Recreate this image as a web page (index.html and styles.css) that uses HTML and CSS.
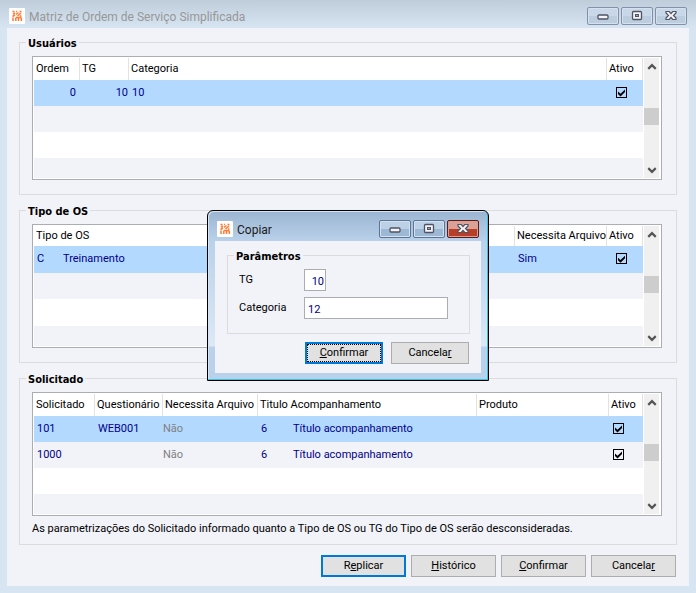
FILE: index.html
```html
<!DOCTYPE html>
<html lang="pt-BR">
<head>
<meta charset="UTF-8">
<meta name="viewport" content="width=device-width, initial-scale=1.0">
<title>Matriz de Ordem de Serviço Simplificada</title>
<link rel="stylesheet" href="styles.css">
</head>
<body>

<!-- Ícones reutilizados -->
<svg class="sprite" aria-hidden="true">
  <symbol id="logo" viewBox="0 0 16 16">
    <rect width="16" height="16" rx="1" fill="#fff"/>
    <path fill="none" stroke="#ff7a35" stroke-width="1.500" d="M3.500 3.500h2M12.500 3.500h-2M7 3.500h1M4 6l2-1M3.500 8.500L6 7M7 6.500l2.500-2M8.500 8l3.500-3M11 7.500l1.500 1M4 13V9.500M6.800 13V9.500M9.500 13V9.500M12.300 13V9.500M7 9.500h5"/>
  </symbol>
  <symbol id="min" viewBox="0 0 12 12">
    <rect x="1" y="5" width="10" height="4" rx="1" fill="#f4f4f4" stroke="#4f5364" stroke-width="1.300"/>
  </symbol>
  <symbol id="max" viewBox="0 0 12 12">
    <rect x="1.500" y="1.500" width="9" height="8" rx="1" fill="#f4f4f4" stroke="#4f5364" stroke-width="1.300"/>
    <rect x="4.500" y="4.500" width="3" height="2" fill="#8fa6c6" stroke="#4f5364"/>
  </symbol>
  <symbol id="close" viewBox="0 0 12 12">
    <path d="M1 1.500h3.200L6 3.500l1.800-2H11v1.500L8.500 5.500 11 8v1.500H7.800L6 7.500l-1.800 2H1V8l2.500-2.500L1 3z" fill="#f4f4f4" stroke="#4f5364" stroke-width="1.200"/>
  </symbol>
  <symbol id="up" viewBox="0 0 8 8">
    <path d="M1 5.500l3-3 3 3" fill="none" stroke="#555" stroke-width="1.700"/>
  </symbol>
  <symbol id="down" viewBox="0 0 8 8">
    <path d="M1 2.500l3 3 3-3" fill="none" stroke="#555" stroke-width="1.700"/>
  </symbol>
</svg>

<div class="window">
  <header class="titlebar">
    <svg class="logo"><use href="#logo"/></svg>
    <h1>Matriz de Ordem de Serviço Simplificada</h1>
    <div class="controls">
      <button type="button" aria-label="Minimizar"><svg><use href="#min"/></svg></button>
      <button type="button" aria-label="Maximizar"><svg><use href="#max"/></svg></button>
      <button type="button" aria-label="Fechar"><svg><use href="#close"/></svg></button>
    </div>
  </header>

  <main class="content">
    <fieldset class="group">
      <legend>Usuários</legend>
      <div class="grid">
        <table>
          <colgroup><col class="w-ordem"><col class="w-tg"><col><col class="w-ativo"></colgroup>
          <thead>
            <tr><th>Ordem</th><th>TG</th><th>Categoria</th><th>Ativo</th></tr>
          </thead>
          <tbody>
            <tr class="selected">
              <td class="num far">0</td><td class="num">10</td><td>10</td>
              <td class="check"><input type="checkbox" checked aria-label="Ativo"></td>
            </tr>
            <tr><td colspan="4"></td></tr>
            <tr><td colspan="4"></td></tr>
            <tr class="cut"><td colspan="4"></td></tr>
          </tbody>
        </table>
        <div class="scroll">
          <button type="button" aria-label="Subir"><svg><use href="#up"/></svg></button>
          <span class="thumb"></span>
          <button type="button" aria-label="Descer"><svg><use href="#down"/></svg></button>
        </div>
      </div>
    </fieldset>

    <fieldset class="group">
      <legend>Tipo de OS</legend>
      <div class="grid">
        <table class="short">
          <colgroup><col class="w-codigo"><col><col class="w-arquivo"><col class="w-ativo"></colgroup>
          <thead>
            <tr><th colspan="2">Tipo de OS</th><th>Necessita Arquivo</th><th>Ativo</th></tr>
          </thead>
          <tbody>
            <tr class="selected">
              <td>C</td><td class="tight">Treinamento</td><td>Sim</td>
              <td class="check"><input type="checkbox" checked aria-label="Ativo"></td>
            </tr>
            <tr><td colspan="4"></td></tr>
            <tr><td colspan="4"></td></tr>
            <tr class="cut"><td colspan="4"></td></tr>
          </tbody>
        </table>
        <div class="scroll">
          <button type="button" aria-label="Subir"><svg><use href="#up"/></svg></button>
          <span class="thumb"></span>
          <button type="button" aria-label="Descer"><svg><use href="#down"/></svg></button>
        </div>
      </div>
    </fieldset>

    <fieldset class="group last">
      <legend>Solicitado</legend>
      <div class="grid">
        <table class="requests">
          <colgroup>
            <col class="w-solicitado"><col class="w-questionario"><col class="w-necessita">
            <col class="w-numero"><col class="w-titulo"><col><col class="w-ativo-sm">
          </colgroup>
          <thead>
            <tr>
              <th>Solicitado</th><th>Questionário</th><th>Necessita Arquivo</th>
              <th colspan="2">Titulo Acompanhamento</th><th>Produto</th><th>Ativo</th>
            </tr>
          </thead>
          <tbody>
            <tr class="selected">
              <td>101</td><td>WEB001</td><td class="off">Não</td><td>6</td><td class="wide">Título acompanhamento</td><td></td>
              <td class="check"><input type="checkbox" checked aria-label="Ativo"></td>
            </tr>
            <tr>
              <td>1000</td><td></td><td class="off">Não</td><td>6</td><td class="wide">Título acompanhamento</td><td></td>
              <td class="check"><input type="checkbox" checked aria-label="Ativo"></td>
            </tr>
            <tr><td colspan="7"></td></tr>
            <tr class="cut"><td colspan="7"></td></tr>
          </tbody>
        </table>
        <div class="scroll">
          <button type="button" aria-label="Subir"><svg><use href="#up"/></svg></button>
          <span class="thumb"></span>
          <button type="button" aria-label="Descer"><svg><use href="#down"/></svg></button>
        </div>
      </div>
      <p class="note">As parametrizações do Solicitado informado quanto a Tipo de OS ou TG do Tipo de OS serão desconsideradas.</p>
    </fieldset>

    <div class="actions">
      <button type="button" class="btn default">R<u>e</u>plicar</button>
      <button type="button" class="btn"><u>H</u>istórico</button>
      <button type="button" class="btn"><u>C</u>onfirmar</button>
      <button type="button" class="btn">Cancela<u>r</u></button>
    </div>
  </main>
</div>

<!-- Diálogo Copiar -->
<div class="dialog" role="dialog" aria-labelledby="dialogTitle">
  <header class="titlebar">
    <svg class="logo"><use href="#logo"/></svg>
    <h2 id="dialogTitle">Copiar</h2>
    <div class="controls">
      <button type="button" aria-label="Minimizar"><svg><use href="#min"/></svg></button>
      <button type="button" aria-label="Maximizar"><svg><use href="#max"/></svg></button>
      <button type="button" class="close" aria-label="Fechar"><svg><use href="#close"/></svg></button>
    </div>
  </header>
  <form class="dialog-body">
    <fieldset class="group params">
      <legend>Parâmetros</legend>
      <label for="tg">TG</label>
      <input type="text" id="tg" class="field small" value="10">
      <label for="categoria">Categoria</label>
      <input type="text" id="categoria" class="field" value="12">
    </fieldset>
    <div class="actions">
      <button type="button" class="btn default focus"><u>C</u>onfirmar</button>
      <button type="button" class="btn">Cancela<u>r</u></button>
    </div>
  </form>
</div>

</body>
</html>
```
FILE: styles.css
```css
* {
  box-sizing: border-box;
}

body {
  margin: 0;
  background: #d7e4f2;
  color: #000;
  font-family: Roboto, "Open Sans", sans-serif;
  font-size: 11px;
  line-height: 14px;
}

.sprite {
  position: absolute;
  width: 0;
  height: 0;
}

/* Janela principal */
.window {
  display: flex;
  flex-direction: column;
  min-height: 100vh;
  padding: 0 7px 7px;
  background: linear-gradient(#bfcddb, #d7e4f2 28px);
}

.titlebar {
  display: flex;
  align-items: center;
  gap: 4px;
  height: 28px;
  padding: 4px 2px 0;
}

.titlebar h1,
.titlebar h2 {
  flex: 1;
  margin: 0;
  padding-top: 1px;
  font-size: 12px;
  font-weight: normal;
  line-height: 16px;
  color: #979797;
}

.logo {
  width: 16px;
  height: 16px;
}

.controls {
  display: flex;
  gap: 2px;
}

.controls button {
  display: flex;
  align-items: center;
  justify-content: center;
  width: 32px;
  height: 18px;
  padding: 0;
  border: 1px solid #8290aa;
  border-radius: 2px;
  background: linear-gradient(#c9d8e8 50%, #bccde0 50%);
  box-shadow: inset 0 0 0 1px #d5e1ee;
}

.controls svg {
  width: 12px;
  height: 12px;
}

.content {
  flex: 1;
  padding: 6px 12px 9px;
  background: #f2f3f9;
}

/* Grupos */
.group {
  min-width: 0;
  margin: 0 0 7px;
  padding: 5px 14px 14px 12px;
  border: 1px solid #dcdcdc;
}

.group legend {
  margin-left: -6px;
  padding: 3px 2px 0;
  font-family: "DejaVu Sans Condensed", "Noto Sans", sans-serif;
  font-weight: bold;
}

.last {
  margin-bottom: 10px;
  padding-bottom: 8px;
}

/* Tabelas */
.grid {
  display: flex;
  height: 124px;
  padding: 1px;
  border: 1px solid #abadb3;
  background: #fff;
}

.grid table {
  flex: 1;
  width: 0;
  border-collapse: separate;
  border-spacing: 0;
  table-layout: fixed;
}

.grid th {
  height: 22px;
  padding: 0 2px;
  border-right: 1px solid #e2e2e2;
  font-weight: normal;
  text-align: left;
  white-space: nowrap;
}

.grid .short th {
  height: 20px;
}

.grid td {
  height: 26px;
  padding: 0 3px;
  color: #00008b;
  white-space: nowrap;
}

.grid .cut td {
  height: 20px;
}

.grid tbody tr:nth-child(even) {
  background: #f2f3f9;
}

.grid tbody .selected {
  background: #b3d9ff;
}

.grid .num {
  padding-right: 1px;
  text-align: right;
}

.grid .far {
  padding-right: 4px;
}

.grid .tight {
  padding-left: 1px;
}

.grid .off {
  padding-left: 0;
  color: #808080;
}

.grid .wide {
  padding-left: 5px;
}

.grid .check {
  padding: 0 7px 1px 0;
  text-align: center;
}

.requests .check {
  padding-right: 15px;
}

.w-ordem { width: 46px; }
.w-tg { width: 49px; }
.w-ativo { width: 36px; }
.w-ativo-sm { width: 34px; }
.w-codigo { width: 28px; }
.w-arquivo { width: 92px; }
.w-solicitado { width: 61px; }
.w-questionario { width: 68px; }
.w-necessita { width: 95px; }
.w-numero { width: 30px; }
.w-titulo { width: 189px; }

input[type="checkbox"] {
  appearance: none;
  width: 11px;
  height: 11px;
  margin: 0;
  border: 1px solid #000;
  vertical-align: middle;
}

input[type="checkbox"]:checked::before {
  content: "";
  display: block;
  width: 9px;
  height: 9px;
  background: #000;
  clip-path: polygon(11% 39%, 39% 64%, 89% 17%, 89% 44%, 39% 94%, 11% 66%);
}

/* Barra de rolagem */
.scroll {
  display: flex;
  flex-direction: column;
  justify-content: space-between;
  width: 15px;
  margin: 0 1px;
  background: #f0f0f0;
}

.scroll button {
  display: flex;
  align-items: center;
  justify-content: center;
  height: 17px;
  padding: 0;
  border: 0;
  background: none;
}

.scroll svg {
  width: 10px;
  height: 10px;
}

.thumb {
  height: 17px;
  margin-bottom: 3px;
  background: #cdcdcd;
}

.note {
  margin: 6px 0 0;
  white-space: nowrap;
}

/* Botões */
.actions {
  display: flex;
  justify-content: flex-end;
  gap: 5px;
  padding-right: 1px;
}

.btn {
  width: 85px;
  height: 22px;
  padding: 0;
  border: 1px solid #adadad;
  background: #e1e1e1;
  color: #000;
  font: inherit;
}

.default {
  border: 2px solid #0078d7;
}

.focus {
  outline: 1px dotted #000;
  outline-offset: -3px;
}

/* Diálogo */
.dialog {
  position: absolute;
  top: 210px;
  left: 207px;
  width: 282px;
  padding: 2px 7px 7px;
  border: 1px solid #000;
  border-radius: 6px 6px 0 0;
  background: linear-gradient(#9bb4d1, #b9d1ea 30px, #dce8f5 135px, #b9d1ea 136px);
  box-shadow: inset -1px -1px #35c4dc, inset 1px 1px #d8e6f4;
}

.dialog .titlebar h2 {
  color: #1a1a1a;
}

.dialog .controls button {
  border-color: #5c7594;
  background: linear-gradient(#bcd0e6 50%, #9db8d5 50%);
}

.dialog .controls .close {
  border-color: #5a1c1c;
  background: linear-gradient(#dba096 50%, #b93e28 50%);
  box-shadow: inset 0 0 0 1px #dc9d92;
}

.dialog-body {
  padding: 6px 11px 9px 12px;
  background: #f2f3f9;
}

.params {
  display: grid;
  grid-template-columns: 65px 144px;
  align-items: center;
  row-gap: 6px;
  margin-bottom: 8px;
  padding: 5px 11px 14px;
}

.params legend {
  margin-left: -5px;
}

.field {
  width: 100%;
  height: 22px;
  padding: 2px 3px 0;
  border: 1px solid #abadb3;
  background: #fff;
  color: #00008b;
  font: inherit;
}

.small {
  width: 22px;
  padding: 2px 1px 0;
  text-align: right;
}

.dialog .actions {
  gap: 8px;
}

.dialog .btn {
  width: 78px;
}
```
